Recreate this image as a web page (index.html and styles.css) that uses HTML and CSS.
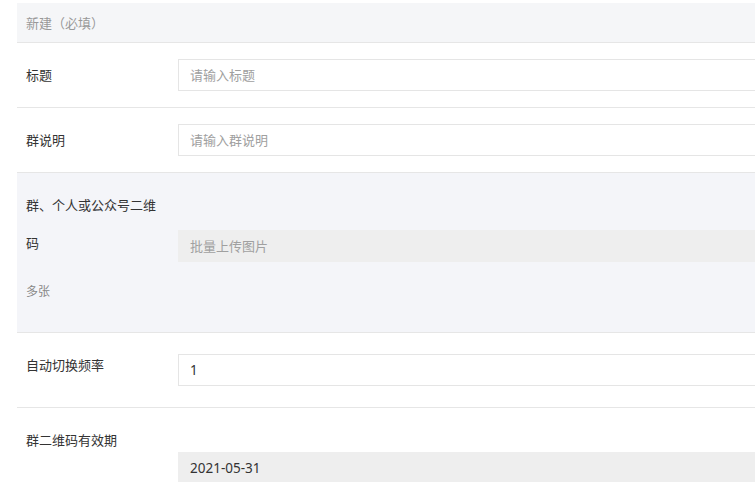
FILE: index.html
```html
<!DOCTYPE html>
<html lang="zh-CN">
<head>
<meta charset="utf-8">
<title>新建</title>
<link rel="stylesheet" href="styles.css">
</head>
<body>
<div class="form">
  <div class="form-head">新建（必填）</div>
  <div class="row row-std">
    <div class="label">标题</div>
    <div class="field"><div class="input placeholder">请输入标题</div></div>
  </div>
  <div class="row row-std">
    <div class="label">群说明</div>
    <div class="field"><div class="input placeholder">请输入群说明</div></div>
  </div>
  <div class="row row-qr">
    <div class="label">
      <div class="label-wrap">群、个人或公众号二维码</div>
      <div class="hint">多张</div>
    </div>
    <div class="field"><div class="input disabled placeholder">批量上传图片</div></div>
  </div>
  <div class="row row-freq">
    <div class="label">自动切换频率</div>
    <div class="field"><div class="input value">1</div></div>
  </div>
  <div class="row row-date">
    <div class="label">群二维码有效期</div>
    <div class="field"><div class="input disabled value">2021-05-31</div></div>
  </div>
</div>
</body>
</html>
```
FILE: styles.css
```css
html, body {
  margin: 0;
  padding: 0;
  background: #ffffff;
  overflow: hidden;
}
body {
  width: 755px;
  height: 482px;
  font-family: "Noto Sans CJK SC", "Noto Sans", sans-serif;
  font-size: 13px;
  color: #333333;
}
.form {
  margin: 3px 0 0 17px;
  width: 738px;
}
.form-head {
  height: 39px;
  line-height: 39px;
  padding-left: 9px;
  background: #f5f6f8;
  color: #999999;
  border-bottom: 1px solid #e6e6e6;
}
.row {
  display: flex;
  align-items: flex-start;
  border-bottom: 1px solid #e6e6e6;
}
.label {
  width: 152px;
  padding-left: 9px;
  flex: none;
}
.field {
  flex: 1;
}
.input {
  height: 30px;
  line-height: 30px;
  border: 1px solid #e5e5e5;
  border-right: none;
  background: #ffffff;
  padding-left: 11px;
}
.input.disabled {
  background: #eeeeee;
  border-color: #eeeeee;
}
.placeholder { color: #a0a0a0; }
.value {
  color: #333333;
  font-family: "Noto Sans", "Noto Sans CJK SC", sans-serif;
  font-size: 13.5px;
}

.row-std {
  padding: 16px 0;
}
.row-std .label {
  line-height: 32px;
}

.row-qr {
  background: #f4f5f9;
  height: 159px;
}
.row-qr .label {
  padding-top: 13px;
}
.label-wrap {
  width: 135px;
  line-height: 38px;
}
.hint {
  margin-top: 20px;
  font-size: 12px;
  line-height: 18px;
  color: #888888;
}
.row-qr .field {
  padding-top: 57px;
}

.row-freq {
  padding: 21px 0;
}
.row-freq .label {
  line-height: 22px;
}

.row-date {
  box-sizing: border-box;
  padding-top: 21px;
  height: 74px;
  border-bottom: none;
  overflow: hidden;
}
.row-date .label {
  line-height: 22px;
}
.row-date .field {
  padding-top: 23px;
}
```
